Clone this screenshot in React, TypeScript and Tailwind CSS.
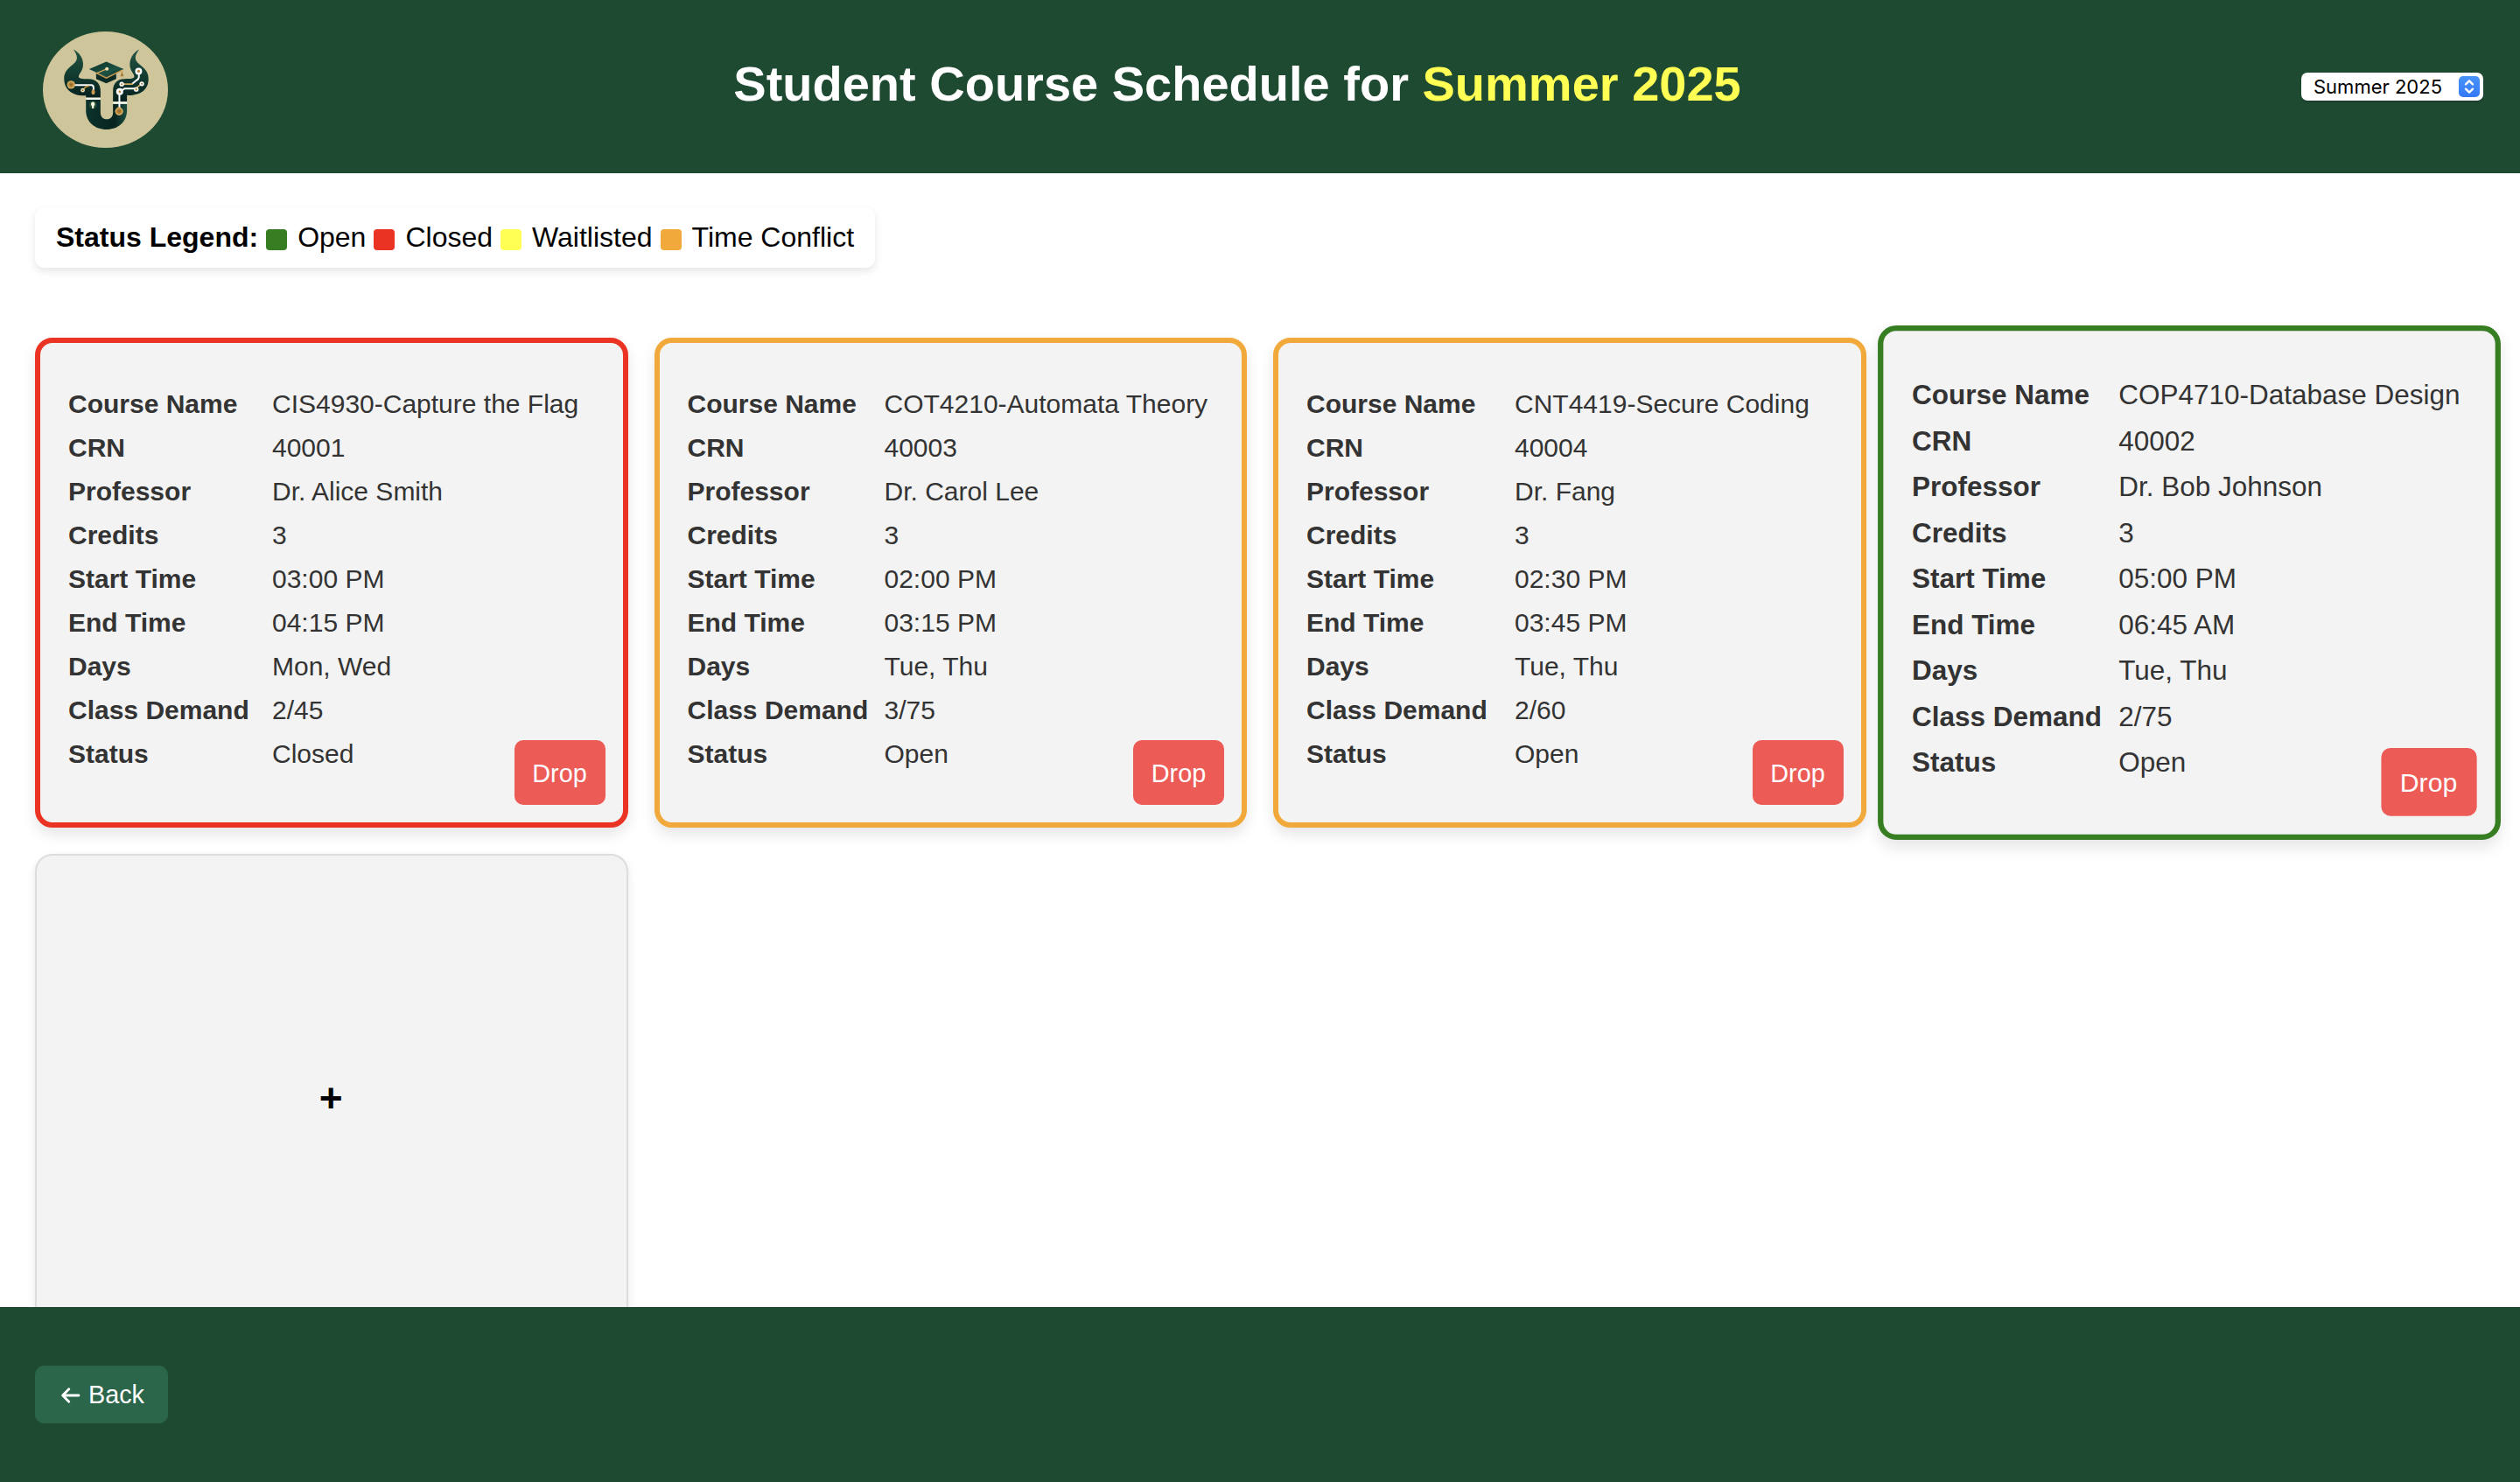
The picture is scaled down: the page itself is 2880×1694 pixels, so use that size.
import React from "react";

type Course = {
  name: string;
  crn: string;
  professor: string;
  credits: string;
  start: string;
  end: string;
  days: string;
  demand: string;
  status: string;
  frame: string;
  columns: string;
};

const courses: Course[] = [
  { name: "CIS4930-Capture the Flag", crn: "40001", professor: "Dr. Alice Smith", credits: "3", start: "03:00 PM", end: "04:15 PM", days: "Mon, Wed", demand: "2/45", status: "Closed", frame: "border-[#eb3323] px-8 pt-11", columns: "grid-cols-[233px_1fr]" },
  { name: "COT4210-Automata Theory", crn: "40003", professor: "Dr. Carol Lee", credits: "3", start: "02:00 PM", end: "03:15 PM", days: "Tue, Thu", demand: "3/75", status: "Open", frame: "border-[#f2a93b] px-8 pt-11", columns: "grid-cols-[225px_1fr]" },
  { name: "CNT4419-Secure Coding", crn: "40004", professor: "Dr. Fang", credits: "3", start: "02:30 PM", end: "03:45 PM", days: "Tue, Thu", demand: "2/60", status: "Open", frame: "border-[#f2a93b] px-8 pt-11", columns: "grid-cols-[238px_1fr]" },
  { name: "COP4710-Database Design", crn: "40002", professor: "Dr. Bob Johnson", credits: "3", start: "05:00 PM", end: "06:45 AM", days: "Tue, Thu", demand: "2/75", status: "Open", frame: "border-[#377e22] px-[31px] pt-[44.5px] scale-105", columns: "grid-cols-[225px_1fr]" },
];

const legend = [
  { label: "Open", color: "bg-[#377e22]" },
  { label: "Closed", color: "bg-[#eb3323]" },
  { label: "Waitlisted", color: "bg-[#ffff54]" },
  { label: "Time Conflict", color: "bg-[#f2a93b]" },
];

function Logo() {
  return (
    <svg viewBox="57 48 430 398" preserveAspectRatio="none" className="h-[133px] w-[143px]">
      <defs>
        <linearGradient id="horn" x1="0" y1="0" x2="0" y2="1">
          <stop offset="0" stopColor="#235443" />
          <stop offset="0.45" stopColor="#143f33" />
          <stop offset="1" stopColor="#06211f" />
        </linearGradient>
        <linearGradient id="stem" x1="0" y1="0" x2="1" y2="0">
          <stop offset="0" stopColor="#0b332c" />
          <stop offset="0.7" stopColor="#07241f" />
          <stop offset="1" stopColor="#1d4f40" />
        </linearGradient>
        <linearGradient id="cap" x1="0" y1="0" x2="1" y2="1">
          <stop offset="0" stopColor="#0b3029" />
          <stop offset="0.6" stopColor="#1c5243" />
          <stop offset="1" stopColor="#0a2f28" />
        </linearGradient>
        <radialGradient id="gold">
          <stop offset="0" stopColor="#8a5a1c" />
          <stop offset="0.5" stopColor="#b98a40" />
          <stop offset="1" stopColor="#d9b36b" />
        </radialGradient>
      </defs>
      <ellipse cx="272" cy="247" rx="215" ry="199" fill="#cec59b" />
      <path d="M162 109C184 120 198 142 195 166C193 184 180 193 180 202C181 210 192 210 214 210C240 211 255 226 255 250V274H205V267C168 270 130 252 130 210C130 168 174 164 174 138C174 127 168 118 162 109Z" fill="url(#horn)" />
      <path d="M388 109C366 120 354 142 356 166C358 184 372 193 371 203C370 210 358 210 336 210C312 211 298 226 298 250V288H346V266C386 268 420 250 420 210C420 168 376 164 375 138C375 127 382 118 388 109Z" fill="url(#horn)" />
      <path d="M205 280H255V324C255 340 264 348 276 348C289 348 298 340 298 324V296H346V318C346 358 314 383 276 383C236 383 205 358 205 318Z" fill="url(#stem)" />
      <path d="M205 278H255M298 292H346" stroke="#f4f6ee" strokeWidth="7" />
      <path d="M240 187V210L275 225L309 210V187L275 204Z" fill="#0a2b26" />
      <path d="M216 177L275 151L335 177L275 204Z" fill="url(#cap)" />
      <path d="M240 190L275 207L329 181" fill="none" stroke="#c99a4e" strokeWidth="4" />
      <path d="M241 191L276 176M329 179V194" fill="none" stroke="#d3a65a" strokeWidth="4" />
      <path d="M329 186L335 201H323Z" fill="#a87832" />
      <circle cx="277" cy="176" r="6" fill="#f3dfb4" />
      <path d="M164 231H224Q231 231 231 240V252" fill="none" stroke="#fff" strokeWidth="6" />
      <path d="M195 247L205 237L215 234" fill="none" stroke="#c49443" strokeWidth="5" />
      <circle cx="154" cy="230" r="14" fill="url(#gold)" />
      <circle cx="194" cy="249" r="7" fill="#f1e2bd" />
      <circle cx="194" cy="249" r="3" fill="#a87832" />
      <ellipse cx="230" cy="255" rx="6" ry="9" fill="#c99a4e" />
      <path d="M387 190V204Q386 212 376 217L364 227" fill="none" stroke="#fff" strokeWidth="6" />
      <path d="M334 228H366M378 246L384 236L396 228" fill="none" stroke="#d3ac63" strokeWidth="5" />
      <path d="M320 320V255L338 243H377" fill="none" stroke="#fff" strokeWidth="6" />
      <circle cx="386" cy="184" r="12" fill="#fff" />
      <circle cx="386" cy="184" r="5" fill="#b98236" />
      <circle cx="328" cy="228" r="8" fill="#fff" />
      <circle cx="328" cy="228" r="3" fill="#a87832" />
      <circle cx="397" cy="227" r="8" fill="#fff" />
      <circle cx="397" cy="227" r="3" fill="#a87832" />
      <circle cx="378" cy="246" r="8" fill="#fff" />
      <circle cx="378" cy="246" r="4" fill="#c99a4e" />
      <circle cx="321" cy="254" r="12" fill="#fff" />
      <circle cx="321" cy="254" r="4" fill="#b98236" />
      <circle cx="319" cy="321" r="14" fill="url(#gold)" />
      <circle cx="229" cy="299" r="13" fill="#517a4c" opacity="0.45" />
      <path d="M229 289Q237 290 235 299L232 304V311H226V304L223 299Q221 290 229 289Z" fill="#fbffe0" />
    </svg>
  );
}

function CourseCard({ course }: { course: Course }) {
  const rows = [
    ["Course Name", course.name],
    ["CRN", course.crn],
    ["Professor", course.professor],
    ["Credits", course.credits],
    ["Start Time", course.start],
    ["End Time", course.end],
    ["Days", course.days],
    ["Class Demand", course.demand],
    ["Status", course.status],
  ];
  return (
    <article className={`relative h-[560px] rounded-[20px] border-[6px] bg-[#f3f3f3] shadow-[0_8px_16px_rgba(0,0,0,0.1)] ${course.frame}`}>
      <dl className={`grid auto-rows-[50px] items-center text-[30px] text-[#333] ${course.columns}`}>
        {rows.map(([label, value]) => (
          <React.Fragment key={label}>
            <dt className="font-bold whitespace-nowrap">{label}</dt>
            <dd className="whitespace-nowrap">{value}</dd>
          </React.Fragment>
        ))}
      </dl>
      <button className="absolute right-5 bottom-5 h-[74px] w-[104px] rounded-[10px] bg-[#ec5b56] pt-[3px] text-[28.8px] text-white">Drop</button>
    </article>
  );
}

export default function App() {
  return (
    <div className="flex h-[1694px] w-[2880px] flex-col overflow-hidden bg-white font-['Liberation_Sans',Arial,sans-serif] text-black">
      <header className="flex h-[198px] shrink-0 items-start justify-between bg-[#1f4a32] pr-[42px] pl-[49px]">
        <div className="mt-9 w-[149px]">
          <Logo />
        </div>
        <h1 className="mt-[63px] text-[56px] leading-[66px] font-bold whitespace-nowrap text-white">
          Student Course Schedule for <span className="text-[#ffff54]">Summer 2025</span>
        </h1>
        <button className="mt-[83px] flex h-8 w-[208px] items-center justify-between rounded-[7px] bg-white pr-1 pl-[14px] font-[Inter,sans-serif] text-[22px] shadow-[0_1px_2px_rgba(0,0,0,0.3)]">
          <span>Summer 2025</span>
          <svg viewBox="0 0 24 24" className="size-6 rounded-[5px] bg-linear-to-b from-[#4a94f8] to-[#3478f6]" fill="none" stroke="#fff" strokeWidth="2.4" strokeLinecap="round" strokeLinejoin="round">
            <path d="M8 9.3L12 5.4L16 9.3M8 14.7L12 18.6L16 14.7" />
          </svg>
        </button>
      </header>

      <main className="flex min-h-0 flex-1 flex-col overflow-hidden px-10 pt-[39px]">
        <div className="flex h-[69px] w-[960px] shrink-0 items-center gap-[9px] rounded-[10px] bg-white pb-0.5 pl-6 text-[32px] whitespace-nowrap shadow-[0_4px_10px_rgba(0,0,0,0.1)]">
          <strong>Status Legend:</strong>
          {legend.map((item) => (
            <span key={item.label} className="flex items-center gap-3">
              <i className={`mt-[7px] size-6 rounded-[4px] ${item.color}`} />
              {item.label}
            </span>
          ))}
        </div>
        <section className="mt-20 grid grid-cols-4 gap-[30px]">
          {courses.map((course) => (
            <CourseCard key={course.crn} course={course} />
          ))}
          <button className="flex h-[560px] items-center justify-center rounded-[20px] border-2 border-[#ddd] bg-[#f3f3f3] pr-px pb-0.5 text-[46px] font-bold shadow-[0_4px_10px_rgba(0,0,0,0.1)]">+</button>
        </section>
      </main>

      <footer className="h-[200px] shrink-0 bg-[#1f4a32] px-10 pt-[67px]">
        <button className="flex h-[66px] w-[152px] items-center gap-2 rounded-[10px] bg-[#2b664a] pt-0.5 pl-[29px] text-[28.8px] text-white">
          <svg viewBox="0 0 24 24" className="size-6" fill="none" stroke="currentColor" strokeWidth="2.8" strokeLinecap="round" strokeLinejoin="round">
            <path d="M21 12H3M9.8 4.8L2.6 12L9.8 19.2" />
          </svg>
          Back
        </button>
      </footer>
    </div>
  );
}
